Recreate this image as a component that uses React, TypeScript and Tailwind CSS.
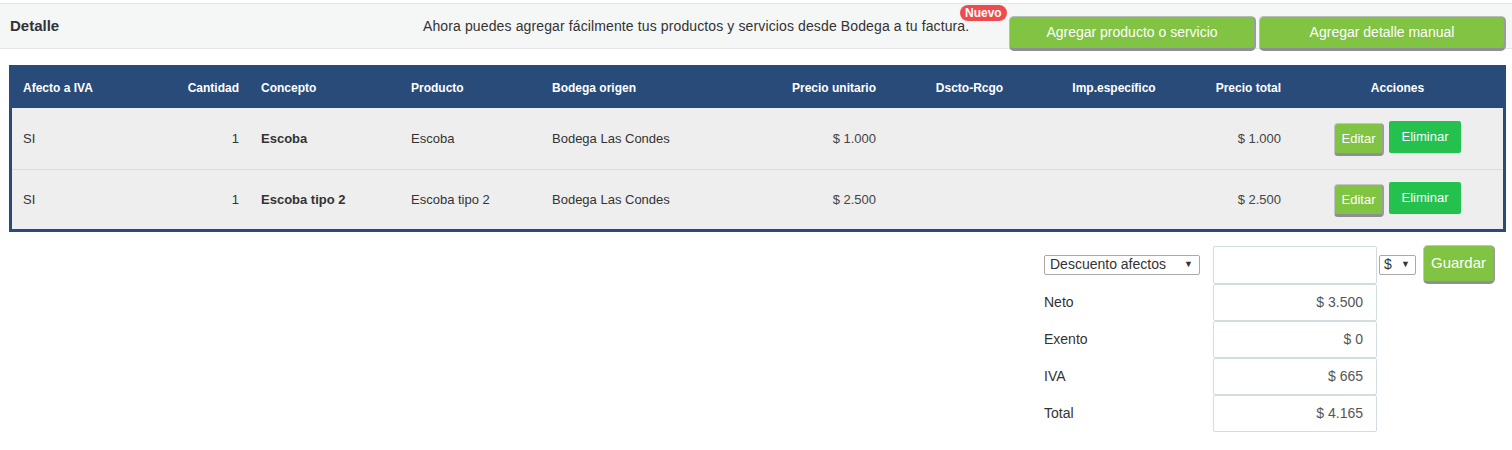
import React from 'react'

const cols =
  'grid grid-cols-[138px_100px_150px_141px_200px_146px_165px_124px_116px_211px] items-center'

const rows = [
  { iva: 'SI', qty: '1', concept: 'Escoba', product: 'Escoba', store: 'Bodega Las Condes', unit: '$ 1.000', total: '$ 1.000' },
  { iva: 'SI', qty: '1', concept: 'Escoba tipo 2', product: 'Escoba tipo 2', store: 'Bodega Las Condes', unit: '$ 2.500', total: '$ 2.500' },
]

const totals = [
  { label: 'Neto', value: '$ 3.500' },
  { label: 'Exento', value: '$ 0' },
  { label: 'IVA', value: '$ 665' },
  { label: 'Total', value: '$ 4.165' },
]

function GreenButton({ children }: { children: React.ReactNode }) {
  return (
    <button className="relative h-[35px] w-[247px] rounded-[5px] border border-[#b9bcbc] border-b-[3px] border-b-[#8e8f90] border-r-2 border-r-[#9a9b9c] bg-[#81c342] text-[14px] text-white">
      {children}
    </button>
  )
}

export default function App() {
  return (
    <div className="min-h-[450px] w-[1512px] bg-white pt-[3px] font-['Liberation_Sans',Arial,sans-serif] text-[#333]">
      {/* cabecera */}
      <div className="flex h-[46px] items-center border-y border-[#e4e6e6] bg-[#f5f6f6] pl-[10px]">
        <div className="w-[413px] text-[15px] font-bold text-[#333]">Detalle</div>
        <div className="relative w-[586px] text-[14px] tracking-[0.12px] text-[#333]">
          Ahora puedes agregar fácilmente tus productos y servicios desde Bodega a tu factura.
          <span className="absolute left-[537px] top-[-11px] rounded-full bg-[#ef4b4f] px-[5px] text-[12px] font-bold leading-[16px] tracking-normal text-white">
            Nuevo
          </span>
        </div>
        <div className="mt-[14px] flex gap-[3px]">
          <GreenButton>Agregar producto o servicio</GreenButton>
          <GreenButton>Agregar detalle manual</GreenButton>
        </div>
      </div>

      {/* tabla */}
      <div className="ml-[9px] mt-[16px] w-[1497px] border-[3px] border-[#284b7a] bg-[#eeeeee]">
        <div className={`${cols} h-[40px] bg-[#284b7a] text-[12px] font-bold text-white`}>
          <div className="pl-[11px]">Afecto a IVA</div>
          <div className="pr-[11px] text-right">Cantidad</div>
          <div className="pl-[11px]">Concepto</div>
          <div className="pl-[11px]">Producto</div>
          <div className="pl-[11px]">Bodega origen</div>
          <div className="pr-[11px] text-right">Precio unitario</div>
          <div className="text-center">Dscto-Rcgo</div>
          <div className="text-center">Imp.específico</div>
          <div className="pr-[11px] text-right">Precio total</div>
          <div className="text-center">Acciones</div>
        </div>
        {rows.map((r, i) => (
          <div
            key={i}
            className={`${cols} text-[13px] text-[#333] ${i === 0 ? 'h-[61px]' : 'h-[60px] border-t border-[#dcdcdc]'}`}
          >
            <div className="pl-[11px]">{r.iva}</div>
            <div className="pr-[11px] text-right">{r.qty}</div>
            <div className="pl-[11px] font-bold">{r.concept}</div>
            <div className="pl-[11px]">{r.product}</div>
            <div className="pl-[11px]">{r.store}</div>
            <div className="pr-[11px] text-right text-[#444]">{r.unit}</div>
            <div />
            <div />
            <div className="pr-[11px] text-right text-[#444]">{r.total}</div>
            <div className="flex items-start justify-center gap-[5px]">
              <button className="mt-[2px] h-[33px] w-[50px] rounded-[4px] border border-[#c4c4c4] border-b-[3px] border-b-[#8e8f90] border-r-2 border-r-[#9a9b9c] bg-[#81c342] text-[13px] text-white">
                Editar
              </button>
              <button className="h-[32px] w-[72px] rounded-[2px] bg-[#25c14f] text-[13px] text-white">
                Eliminar
              </button>
            </div>
          </div>
        ))}
      </div>

      {/* totales */}
      <div className="mt-[13px] flex justify-end pr-[17px] text-[14px]">
        <div className="grid grid-cols-[169px_164px_118px] items-center">
          <div>
            <div className="flex h-[20px] w-[156px] items-center justify-between rounded-[2px] border border-[#a9a9a9] bg-white pl-[5px] pr-[6px] text-[14px] text-[#333]">
              <span>Descuento afectos</span>
              <span className="text-[9px]">▼</span>
            </div>
          </div>
          <div className="h-[38px] rounded-[2px] border border-[#d3dcdf] bg-white" />
          <div className="flex items-center">
            <div className="ml-[2px] flex h-[20px] w-[37px] items-center justify-between rounded-[2px] border border-[#a9a9a9] bg-white pl-[4px] pr-[5px] text-[14px] text-[#333]">
              <span>$</span>
              <span className="text-[9px]">▼</span>
            </div>
            <button className="ml-[7px] h-[39px] w-[72px] rounded-[5px] border border-[#c4c4c4] border-b-[3px] border-b-[#8e8f90] border-r-2 border-r-[#9a9b9c] bg-[#81c342] text-[15px] text-white">
              Guardar
            </button>
          </div>
          {totals.map((t) => (
            <React.Fragment key={t.label}>
              <div className="text-[#333]">{t.label}</div>
              <div className="flex h-[37px] items-center justify-end rounded-[2px] border border-[#d3dcdf] bg-white pr-[13px] text-[#555]">
                {t.value}
              </div>
              <div />
            </React.Fragment>
          ))}
        </div>
      </div>
    </div>
  )
}
